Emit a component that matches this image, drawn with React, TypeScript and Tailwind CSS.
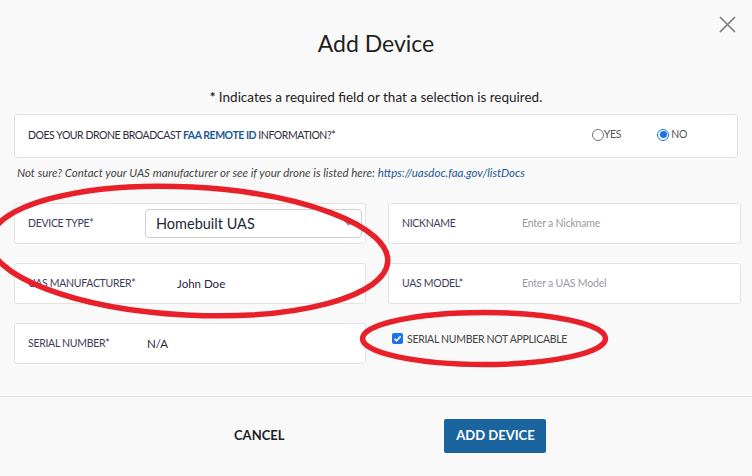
import React from "react";

const font = { fontFamily: "Lato, 'Open Sans', sans-serif" };

const Field = ({ label, children }: { label: string; children?: React.ReactNode }) => (
  <div className="flex h-[41px] items-center rounded-[3px] border border-[#e2e2e2] bg-white pl-[13px]">
    <span className="w-[120px] shrink-0 text-[10.5px] uppercase tracking-[-0.3px] text-[#3e3d5c]">{label}</span>
    {children}
  </div>
);

export default function App() {
  return (
    <div className="relative h-[476px] w-[752px] overflow-hidden bg-[#f9f9f9]" style={font}>
      <button className="absolute right-[16px] top-[16px] text-[#7a7a7a]">
        <svg width="17" height="17" viewBox="0 0 17 17" stroke="currentColor" strokeWidth="1.6">
          <path d="M1 1 L16 16 M16 1 L1 16" />
        </svg>
      </button>

      <h1 className="pt-[28px] text-center text-[23px] leading-[30px] text-[#1f1f1f]">Add Device</h1>
      <p className="mt-[30px] text-center text-[13.5px] leading-[18px] text-[#222]">
        <span className="font-bold">*</span> Indicates a required field or that a selection is required.
      </p>

      <div className="mx-[14px] mt-[8px] flex h-[44px] items-center rounded-[3px] border border-[#e2e2e2] bg-white pl-[13px] pr-[50px]">
        <span className="text-[10.5px] uppercase tracking-[-0.45px] text-[#2b2b3b]">
          Does your drone broadcast <span className="font-bold text-[#1b5a99]">FAA Remote ID</span> information?*
        </span>
        <div className="ml-auto -mt-[3px] flex items-center gap-[36px]">
          <label className="flex items-center text-[10.5px] tracking-[-0.3px] text-[#555]">
            <span className="h-[12px] w-[12px] rounded-full border border-[#777] bg-white" />
            YES
          </label>
          <label className="flex items-center text-[10.5px] tracking-[-0.3px] text-[#555]">
            <span className="mr-[2px] flex h-[12px] w-[12px] items-center justify-center rounded-full border border-[#1a73e8] bg-white">
              <span className="h-[7px] w-[7px] rounded-full bg-[#1a73e8]" />
            </span>
            NO
          </label>
        </div>
      </div>

      <p className="ml-[17px] mt-[7px] text-[11.5px] italic leading-[16px] text-[#444]">
        Not sure? Contact your UAS manufacturer or see if your drone is listed here:{" "}
        <span className="text-[#1b5a99]">https://uasdoc.faa.gov/listDocs</span>
      </p>

      <div className="ml-[14px] mt-[22px] grid w-[727px] grid-cols-[352px_353px] gap-x-[22px] gap-y-[19px]">
        <div className="flex h-[41px] items-center rounded-[3px] border border-[#e2e2e2] bg-white pl-[13px] pr-[3px]">
          <span className="w-[117px] shrink-0 text-[10.5px] uppercase tracking-[-0.3px] text-[#3e3d5c]">Device Type*</span>
          <div className="flex h-[29px] flex-1 items-center rounded-[4px] border border-[#cfcfcf] bg-white pl-[10px] pr-[8px]">
            <span className="text-[14.5px] text-[#1e2a3a]">Homebuilt UAS</span>
            <svg className="ml-auto" width="9" height="5" viewBox="0 0 9 5">
              <path d="M0 0 H9 L4.5 5 Z" fill="#999" />
            </svg>
          </div>
        </div>
        <Field label="Nickname">
          <span className="text-[10.5px] tracking-[-0.2px] text-[#9a9aa5]">Enter a Nickname</span>
        </Field>
        <Field label="UAS Manufacturer*">
          <span className="ml-[29px] text-[11.5px] text-[#2b2440]">John Doe</span>
        </Field>
        <Field label="UAS Model*">
          <span className="text-[10.5px] tracking-[-0.2px] text-[#9a9aa5]">Enter a UAS Model</span>
        </Field>
        <div className="flex h-[41px] items-center rounded-[3px] border border-[#e2e2e2] bg-white pl-[13px]">
          <span className="w-[119px] shrink-0 text-[10.5px] uppercase tracking-[-0.3px] text-[#3e3d5c]">Serial Number*</span>
          <span className="text-[11.5px] text-[#2b2440]">N/A</span>
        </div>
        <div className="flex items-start pl-[4px] pt-[10px]">
          <span className="flex h-[11px] w-[11px] items-center justify-center rounded-[2px] bg-[#1a73e8]">
            <svg width="9" height="9" viewBox="0 0 9 9">
              <path d="M1.5 4.7 L3.6 6.8 L7.6 2.2" stroke="white" strokeWidth="1.6" fill="none" />
            </svg>
          </span>
          <span className="ml-[4px] text-[10.5px] leading-[12px] tracking-[-0.3px] text-[#444]">SERIAL NUMBER NOT APPLICABLE</span>
        </div>
      </div>

      <div className="mt-[32px] border-t border-[#dde1e6]" />

      <div className="mt-[22px] flex items-center">
        <button className="ml-[234px] text-[13px] font-bold text-[#1f1f1f]">CANCEL</button>
        <button className="ml-[160px] h-[34px] w-[102px] rounded-[2px] bg-[#1a64a0] text-[13px] font-bold text-white">
          ADD DEVICE
        </button>
      </div>

      <svg className="pointer-events-none absolute left-0 top-0" width="752" height="476">
        <ellipse cx="189" cy="251" rx="199" ry="64" fill="none" stroke="#e8202a" strokeWidth="5.5" transform="rotate(3 189 251)" />
        <ellipse cx="484" cy="338.5" rx="121.5" ry="26" fill="none" stroke="#e8202a" strokeWidth="5.5" />
      </svg>
    </div>
  );
}
